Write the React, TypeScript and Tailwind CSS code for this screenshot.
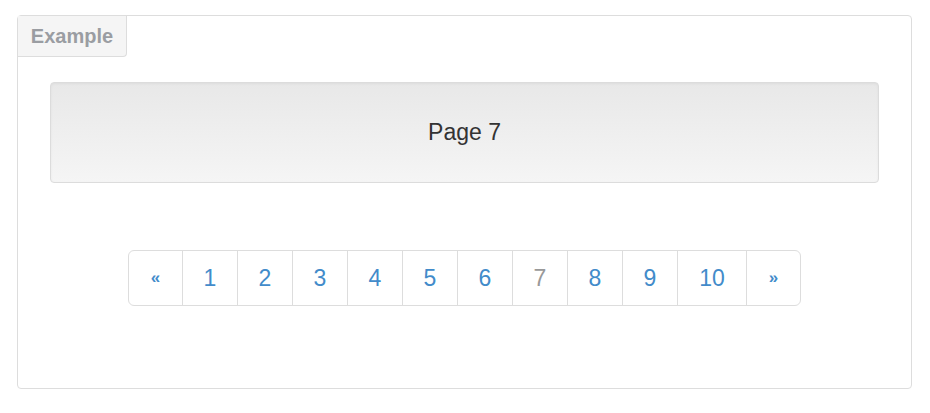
const pages = [1, 2, 3, 4, 5, 6, 7, 8, 9, 10];
const active = 7;

export default function App() {
  return (
    <div className="min-h-[413px] bg-white pl-[17px] pt-[15px] font-['Liberation_Sans',Arial,sans-serif]">
      <div className="flex h-[374px] w-[895px] flex-col rounded-[4px] border border-[#ddd]">
        <div className="flex h-[41px] w-[109px] items-center justify-center rounded-br-[4px] border-b border-r border-[#ddd] bg-[#f5f5f5] pb-px text-[20px] font-bold text-[#9a9da2]">
          Example
        </div>

        <div className="mx-[32px] mt-[25px] flex h-[101px] items-center justify-center rounded-[4px] border border-[#dcdcdc] bg-gradient-to-b from-[#e8e8e8] to-[#f5f5f5] text-[23px] text-[#333] shadow-[inset_0_1px_3px_rgba(0,0,0,0.05)]">
          Page {active}
        </div>

        <div className="mt-[67px] flex justify-center">
          <ul className="flex h-[56px] text-[23px] text-[#428bca]">
            <li className="flex w-[55px] items-center justify-center rounded-l-[6px] border border-[#ddd] pb-px text-[17px] font-bold">
              «
            </li>
            {pages.map((p) => (
              <li
                key={p}
                className={
                  "-ml-px flex items-center justify-center border border-[#ddd] " +
                  (p === 10 ? "w-[70px] " : "w-[56px] ") +
                  (p === active ? "text-[#999]" : "")
                }
              >
                {p}
              </li>
            ))}
            <li className="-ml-px flex w-[55px] items-center justify-center rounded-r-[6px] border border-[#ddd] pb-px text-[17px] font-bold">
              »
            </li>
          </ul>
        </div>
      </div>
    </div>
  );
}
